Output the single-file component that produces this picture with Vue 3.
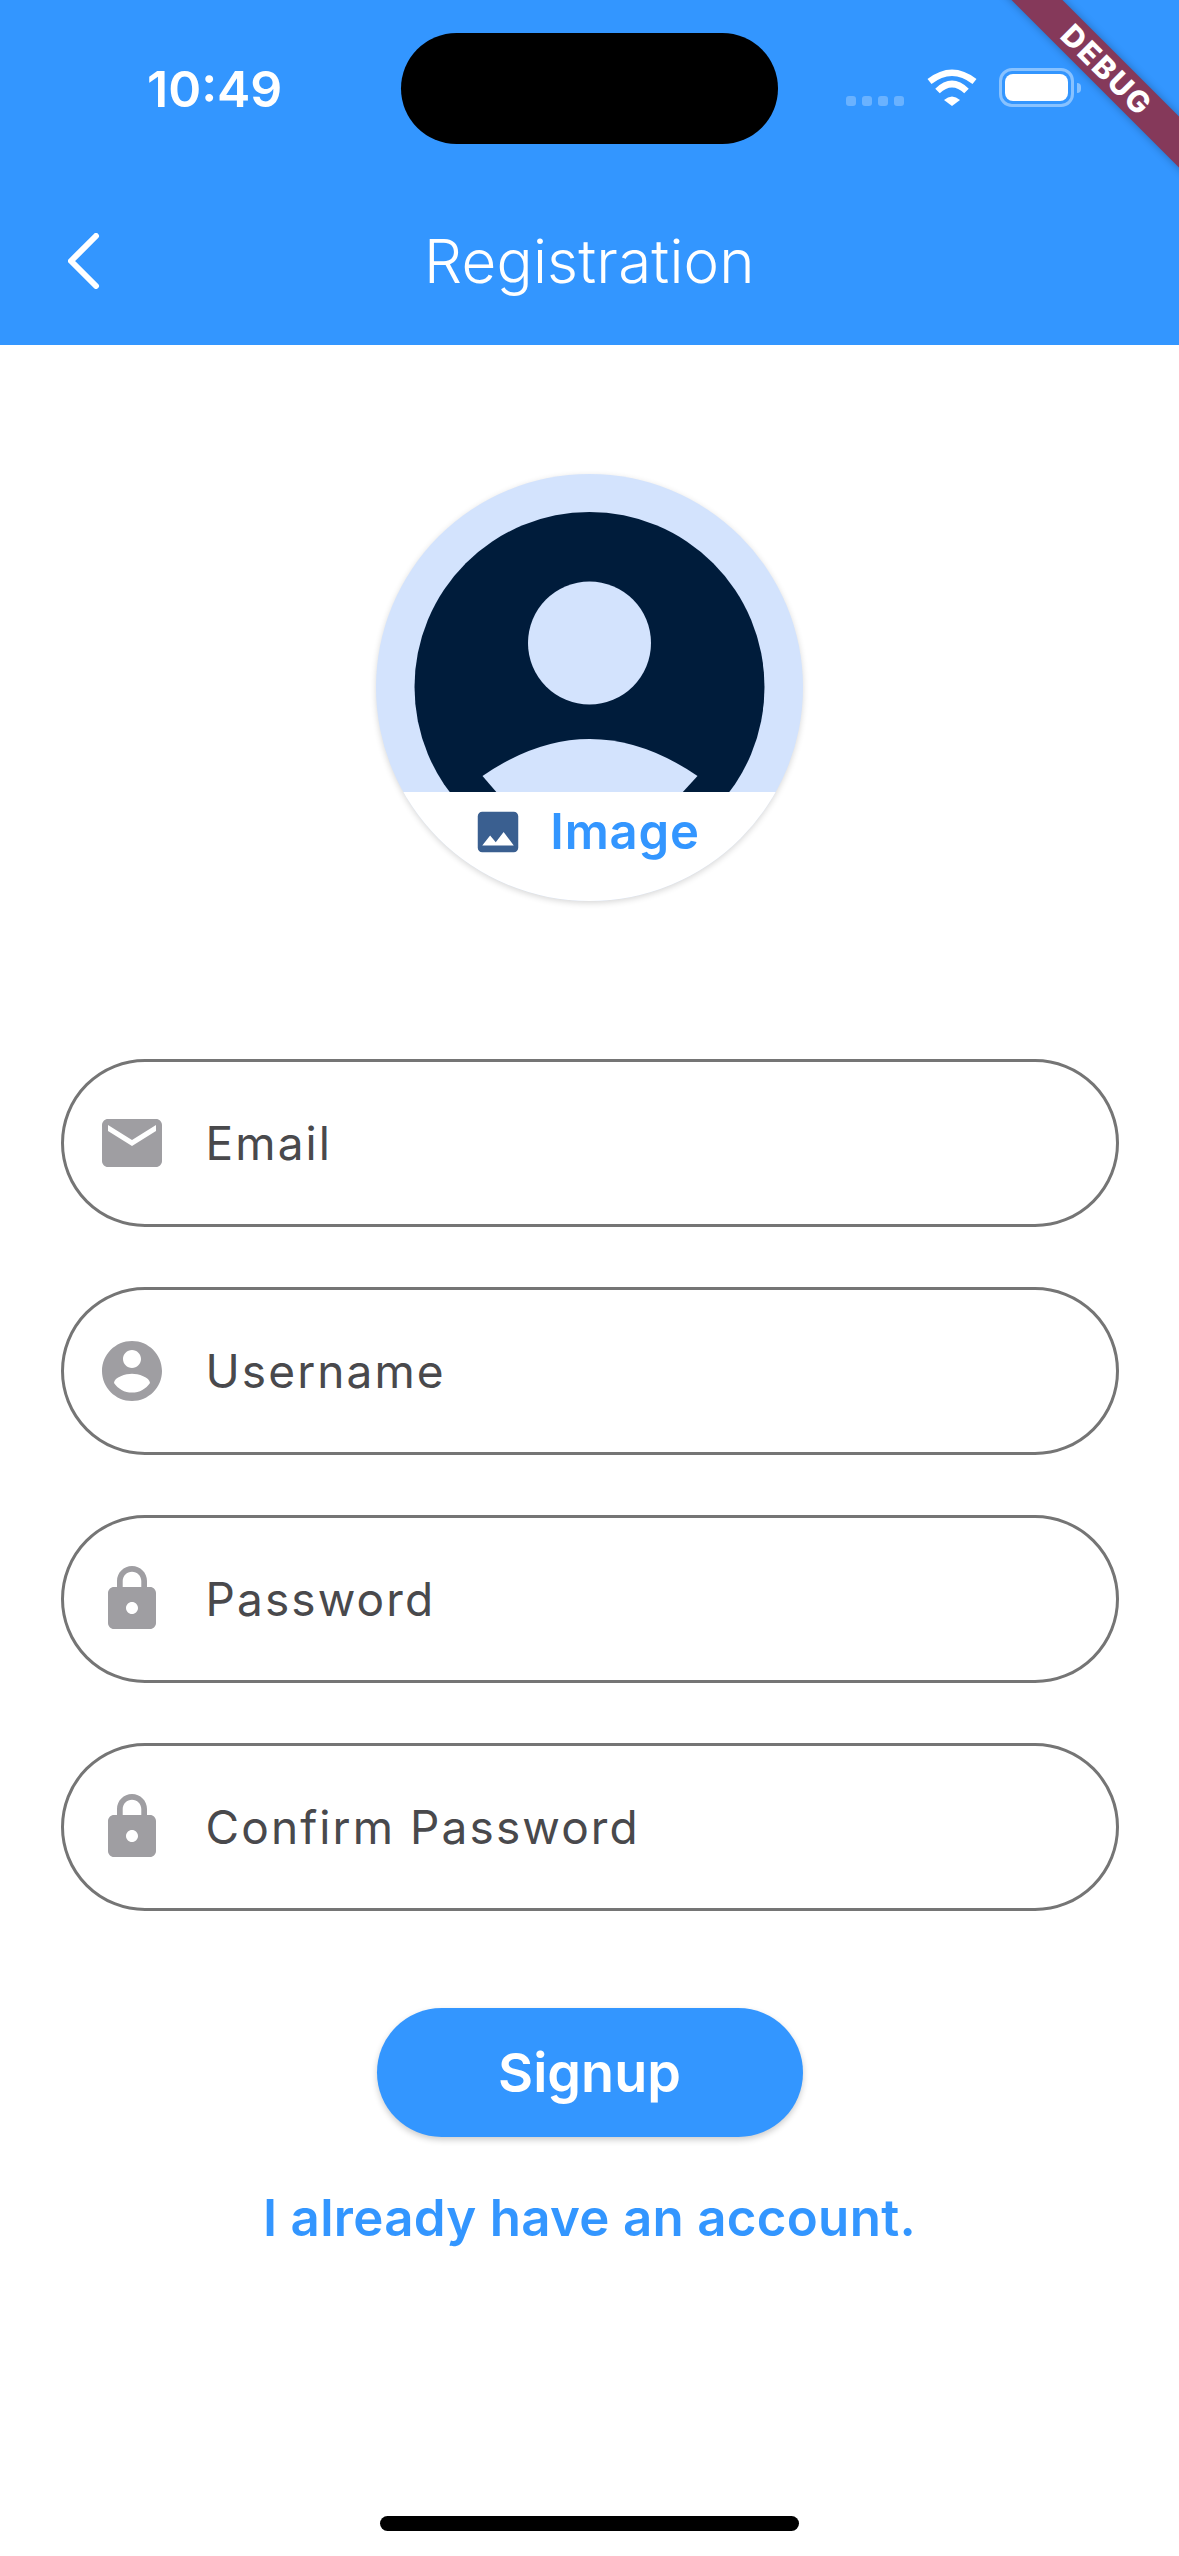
<template>
  <div class="screen">
    <header class="top">
      <div class="status">
        <div class="status-left"><span class="time">10:49</span></div>
        <div class="notch"></div>
        <div class="status-right">
          <svg class="signal" width="58" height="10" viewBox="0 0 58 10">
            <rect v-for="n in 4" :key="n" :x="(n - 1) * 16" width="10" height="10" rx="3" />
          </svg>
          <svg class="wifi" width="50" height="37" viewBox="0 0 50 37">
            <path class="arc" d="M2.5 12.5Q25 -5 47.5 12.5" />
            <path class="arc" d="M10.5 22Q25 8 39.5 22" />
            <path d="M17 31Q25 24 33 31L25 37Z" fill="#fff" />
          </svg>
          <div class="battery">
            <div class="battery-body"><div class="battery-fill"></div></div>
            <div class="battery-nub"></div>
          </div>
        </div>
      </div>
      <div class="appbar">
        <div class="back">
          <svg width="32" height="56" viewBox="0 0 32 56">
            <path d="M28 3L3 28L28 53" fill="none" stroke="#fff" stroke-width="6" stroke-linecap="round" stroke-linejoin="round" />
          </svg>
        </div>
        <h1 class="title">Registration</h1>
      </div>
    </header>

    <div class="banner"><span>DEBUG</span></div>

    <main class="content">
      <div class="avatar">
        <svg class="avatar-art" width="427" height="427" viewBox="0 0 427 427">
          <circle cx="213.5" cy="213" r="175" fill="#001c3b" />
          <circle cx="213.5" cy="169" r="61.5" fill="#d3e3fd" />
          <path d="M106.5 302Q213.5 228 321.5 302L305 320H122Z" fill="#d3e3fd" />
        </svg>
        <div class="avatar-strip">
          <svg width="54" height="54" viewBox="0 0 24 24">
            <path :d="icons.image" fill="#3a5f90" />
          </svg>
          <span>Image</span>
        </div>
      </div>

      <form class="fields" @submit.prevent>
        <div v-for="field in fields" :key="field.label" class="field">
          <svg width="72" height="72" viewBox="0 0 24 24">
            <path :d="icons[field.icon]" fill="#9f9ea2" />
          </svg>
          <span class="field-label">{{ field.label }}</span>
        </div>
      </form>

      <button class="signup" type="button">Signup</button>
      <a class="login-link">I already have an account.</a>
    </main>

    <div class="home-bar"></div>
  </div>
</template>

<script setup>
const icons = {
  email: 'M20 4H4c-1.1 0-1.99.9-1.99 2L2 18c0 1.1.9 2 2 2h16c1.1 0 2-.9 2-2V6c0-1.1-.9-2-2-2zm0 4l-8 5-8-5V6l8 5 8-5v2z',
  person: 'M12 2C6.48 2 2 6.48 2 12s4.48 10 10 10 10-4.48 10-10S17.52 2 12 2zm0 3c1.66 0 3 1.34 3 3s-1.34 3-3 3-3-1.34-3-3 1.34-3 3-3zm0 14.2c-2.5 0-4.71-1.28-6-3.22.03-1.99 4-3.08 6-3.08 1.99 0 5.97 1.09 6 3.08-1.29 1.94-3.5 3.22-6 3.22z',
  lock: 'M18 8h-1V6c0-2.76-2.24-5-5-5S7 3.24 7 6v2H6c-1.1 0-2 .9-2 2v10c0 1.1.9 2 2 2h12c1.1 0 2-.9 2-2V10c0-1.1-.9-2-2-2zm-6 9c-1.1 0-2-.9-2-2s.9-2 2-2 2 .9 2 2-.9 2-2 2zm3.1-9H8.9V6c0-1.71 1.39-3.1 3.1-3.1 1.71 0 3.1 1.39 3.1 3.1v2z',
  image: 'M21 19V5c0-1.1-.9-2-2-2H5c-1.1 0-2 .9-2 2v14c0 1.1.9 2 2 2h14c1.1 0 2-.9 2-2zM8.5 13.5l2.5 3.01L14.5 12l4.5 6H5l3.5-4.5z'
}

const fields = [
  { label: 'Email', icon: 'email' },
  { label: 'Username', icon: 'person' },
  { label: 'Password', icon: 'lock' },
  { label: 'Confirm Password', icon: 'lock' }
]
</script>

<style>
html, body {
  margin: 0;
  background: #fff;
}
</style>

<style scoped>
.screen {
  position: relative;
  width: 1179px;
  height: 2556px;
  overflow: hidden;
  background: #fff;
  font-family: Inter, "Liberation Sans", sans-serif;
}

.top {
  background: #3396ff;
  height: 345px;
}

.status {
  display: grid;
  grid-template-columns: 401px 377px 1fr;
  height: 177px;
  padding-top: 33px;
  box-sizing: border-box;
}

.status-left {
  padding-left: 147px;
  height: 111px;
  display: flex;
  align-items: center;
}

.time {
  color: #fff;
  font-size: 50px;
  font-weight: 600;
  line-height: 1;
}

.notch {
  height: 111px;
  border-radius: 56px;
  background: #000;
}

.status-right {
  height: 111px;
  padding-left: 68px;
  display: flex;
  align-items: flex-start;
}

.signal {
  margin-top: 63px;
  fill: rgba(255, 255, 255, 0.27);
}

.wifi {
  margin: 36px 0 0 23px;
}

.arc {
  fill: none;
  stroke: #fff;
  stroke-width: 6.5;
}

.battery {
  display: flex;
  align-items: center;
  margin: 35px 0 0 22px;
}

.battery-body {
  width: 75px;
  height: 39px;
  box-sizing: border-box;
  border: 3px solid rgba(255, 255, 255, 0.42);
  border-radius: 13px;
  padding: 3px;
}

.battery-fill {
  height: 100%;
  border-radius: 8px;
  background: #fff;
}

.battery-nub {
  width: 4px;
  height: 10px;
  margin-left: 3px;
  border-radius: 0 4px 4px 0;
  background: rgba(255, 255, 255, 0.42);
}

.appbar {
  display: grid;
  grid-template-columns: 1fr auto 1fr;
  align-items: center;
  height: 168px;
}

.back {
  padding-left: 68px;
  display: flex;
}

.title {
  margin: 0;
  color: #fff;
  font-size: 60px;
  font-weight: 300;
  letter-spacing: 0.2px;
  line-height: 1;
}

.banner {
  position: absolute;
  left: 957px;
  top: 52px;
  width: 300px;
  height: 36px;
  display: flex;
  align-items: center;
  justify-content: center;
  transform: rotate(45deg);
  background: #85395a;
  box-shadow: 0 0 9px rgba(0, 0, 0, 0.28);
  color: #fff;
  font-size: 30px;
  font-weight: 800;
  letter-spacing: 2px;
  line-height: 1;
}

.content {
  display: flex;
  flex-direction: column;
  align-items: center;
  padding-top: 129px;
}

.avatar {
  position: relative;
  width: 427px;
  height: 427px;
  border-radius: 50%;
  overflow: hidden;
  background: #d3e3fd;
  box-shadow: 0 2px 6px rgba(0, 0, 0, 0.16);
}

.avatar-art {
  display: block;
}

.avatar-strip {
  position: absolute;
  left: 0;
  right: 0;
  top: 318px;
  bottom: 0;
  padding: 0 8px 30px 0;
  display: flex;
  align-items: center;
  justify-content: center;
  gap: 25px;
  background: #fff;
  color: #3396ff;
  font-size: 49px;
  font-weight: 600;
  letter-spacing: 0.8px;
  line-height: 1;
}

.fields {
  display: flex;
  flex-direction: column;
  gap: 60px;
  margin-top: 158px;
}

.field {
  display: flex;
  align-items: center;
  gap: 38px;
  width: 1058px;
  height: 168px;
  box-sizing: border-box;
  padding-left: 32px;
  border: 3px solid #757575;
  border-radius: 84px;
}

.field-label {
  color: #49494c;
  font-size: 46px;
  font-weight: 400;
  letter-spacing: 2.1px;
  line-height: 1;
}

.signup {
  width: 426px;
  height: 129px;
  margin-top: 97px;
  padding: 0;
  border: 0;
  border-radius: 65px;
  background: #3396ff;
  box-shadow: 0 3px 6px rgba(0, 0, 0, 0.2);
  color: #fff;
  font-family: inherit;
  font-size: 54px;
  font-weight: 600;
  line-height: 1;
}

.login-link {
  margin-top: 50px;
  color: #3396ff;
  font-size: 51px;
  font-weight: 600;
  letter-spacing: 0.3px;
  line-height: 1.2;
}

.home-bar {
  position: absolute;
  left: 380px;
  top: 2516px;
  width: 419px;
  height: 15px;
  border-radius: 8px;
  background: #000;
}
</style>
